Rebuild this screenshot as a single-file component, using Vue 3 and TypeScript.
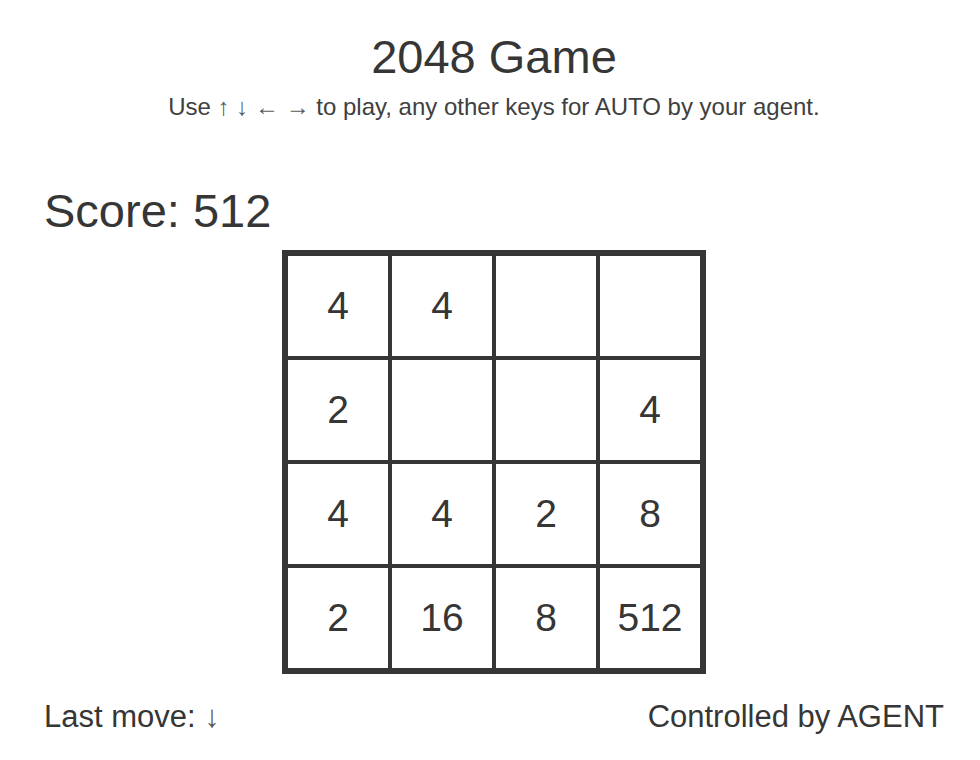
<script setup lang="ts">
import { ref, computed } from 'vue'

const board = ref<number[][]>([
  [4, 4, 0, 0],
  [2, 0, 0, 4],
  [4, 4, 2, 8],
  [2, 16, 8, 512],
])
const lastMove = ref<string>('↓')
const controller = ref<string>('AGENT')
const score = computed<number>(() => Math.max(...board.value.flat()))
</script>

<template>
  <main class="game">
    <header class="intro">
      <h1 class="title">2048 Game</h1>
      <p class="hint">
        Use <span class="arrow">↑ ↓ ← →</span> to play, any other keys for AUTO by your agent.
      </p>
    </header>
    <p class="score">Score: {{ score }}</p>
    <table class="board">
      <tbody>
        <tr v-for="(row, r) in board" :key="r">
          <td v-for="(value, c) in row" :key="c" class="cell">{{ value || '' }}</td>
        </tr>
      </tbody>
    </table>
    <footer class="status">
      <span>Last move: <span class="arrow">{{ lastMove }}</span></span>
      <span>Controlled by {{ controller }}</span>
    </footer>
  </main>
</template>

<style>
body {
  margin: 0;
  background: #fff;
}
</style>

<style scoped>
.game {
  padding: 30px 36px 24px 44px;
  color: #363636;
  font-family: "Liberation Sans", Arial, sans-serif;
}
.intro {
  text-align: center;
}
.title {
  margin: 0;
  font-size: 47px;
  font-weight: 400;
  line-height: 54px;
}
.hint {
  margin: 8px 0 0;
  color: #404040;
  font-size: 24px;
  line-height: 30px;
}
.arrow {
  color: #5a5a5a;
}
.score {
  margin: 62px 0 12px;
  font-size: 47px;
  line-height: 54px;
}
.board {
  margin: 0 auto;
  border: 6px solid #363636;
  border-collapse: separate;
  border-spacing: 0;
}
.cell {
  box-sizing: border-box;
  width: 104px;
  height: 104px;
  padding: 0;
  border-right: 4px solid #363636;
  border-bottom: 4px solid #363636;
  font-size: 39px;
  line-height: 44px;
  text-align: center;
  vertical-align: middle;
}
.cell:last-child {
  width: 100px;
  border-right: 0;
}
tr:last-child .cell {
  height: 100px;
  border-bottom: 0;
}
.status {
  display: flex;
  justify-content: space-between;
  margin-top: 24px;
  font-size: 31px;
  line-height: 38px;
}
</style>
